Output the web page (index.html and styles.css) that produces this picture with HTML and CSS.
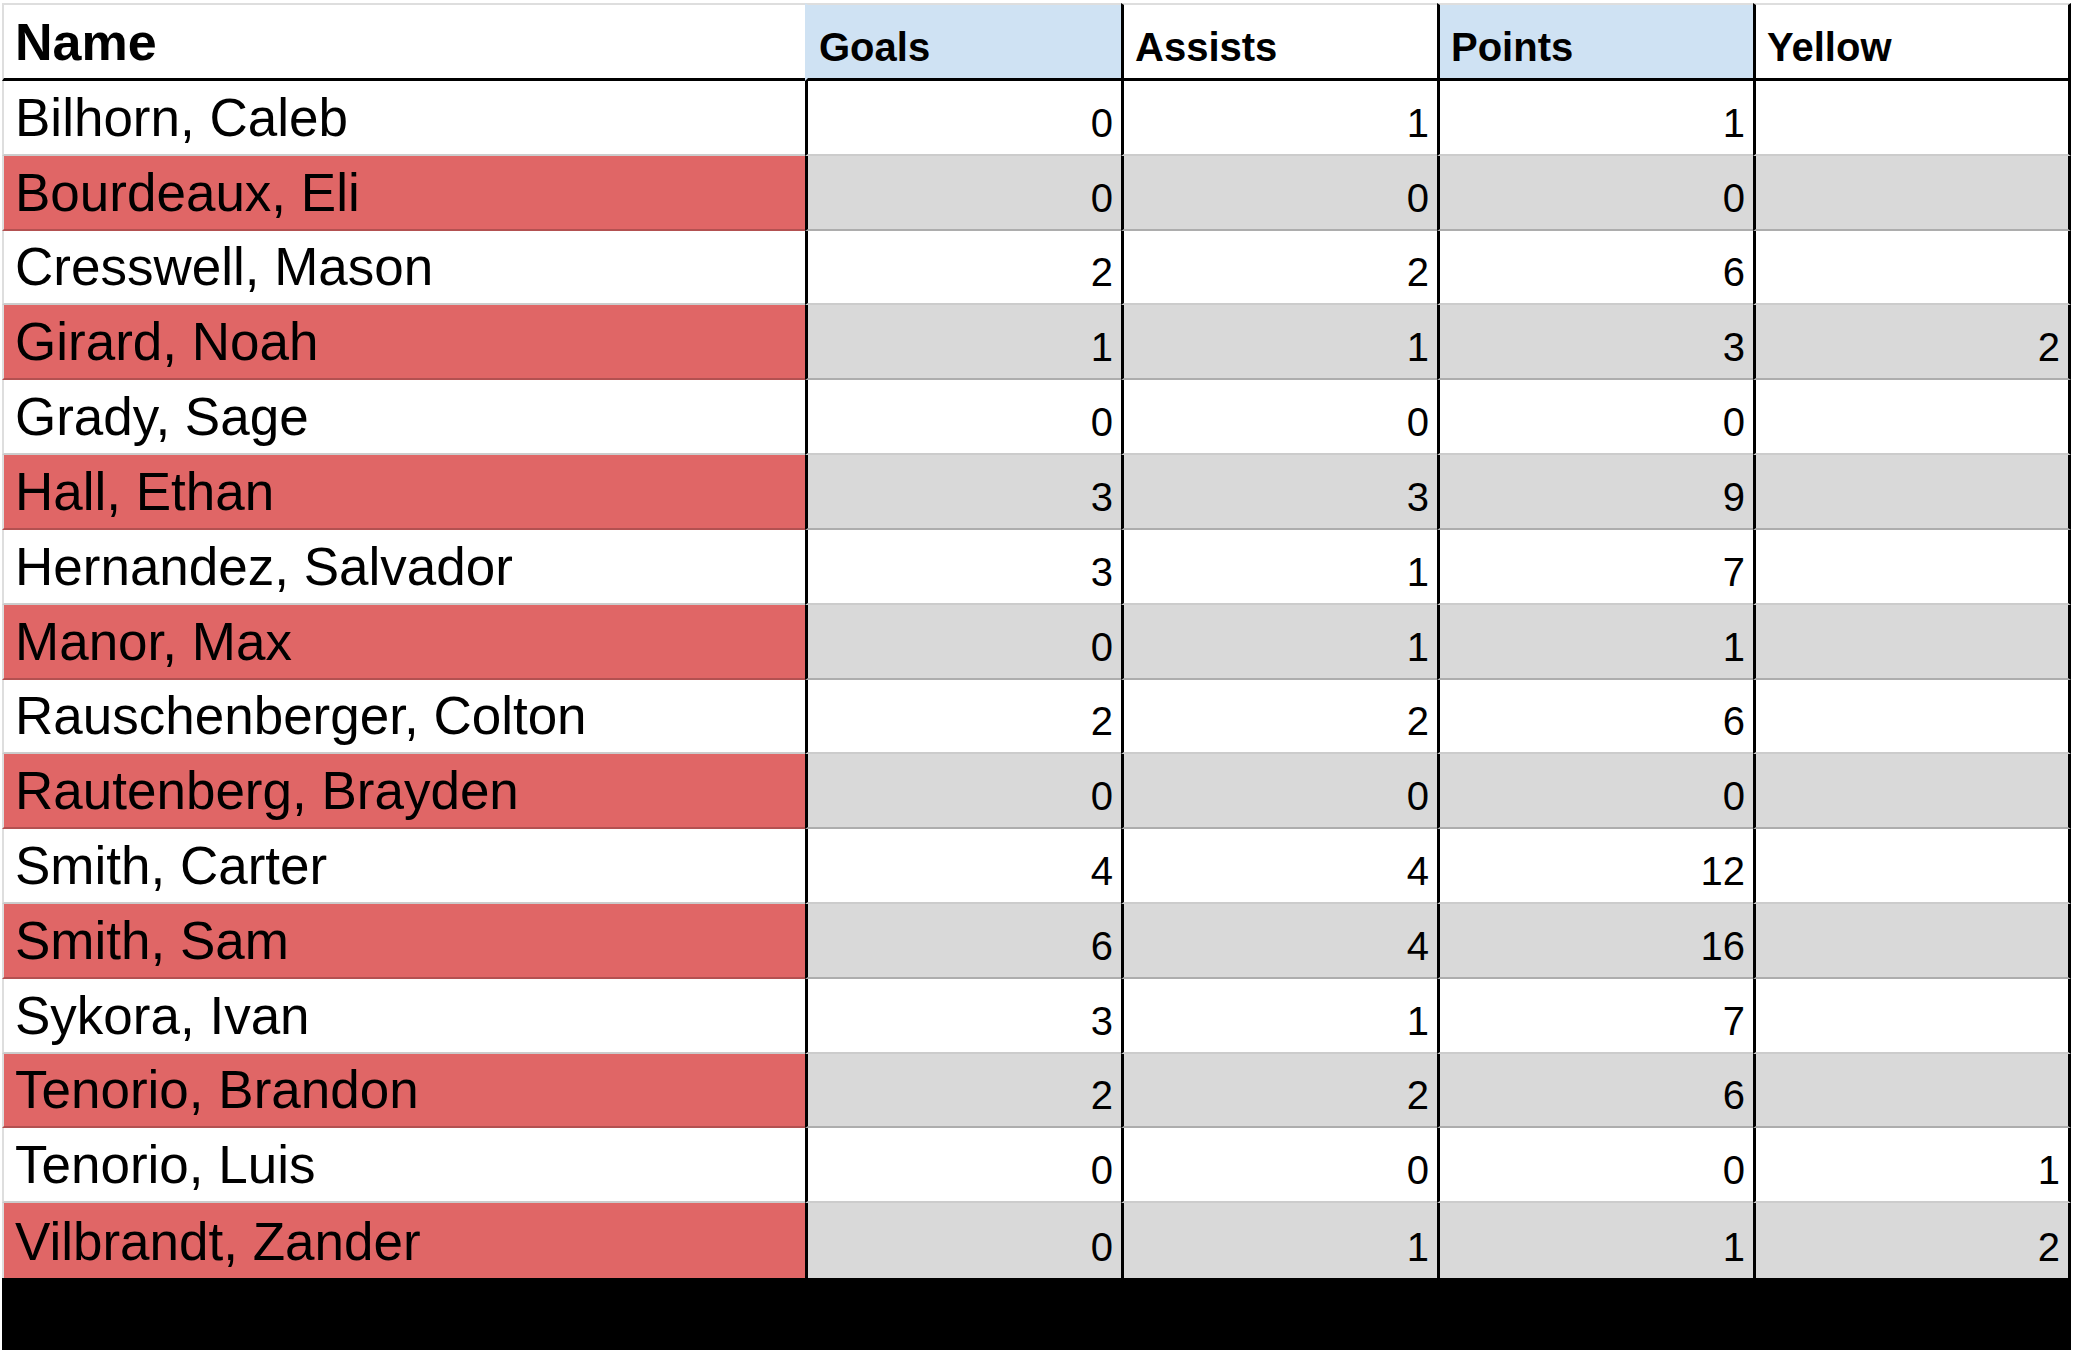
FILE: index.html
```html
<!DOCTYPE html>
<html lang="en">
<head>
<meta charset="utf-8">
<title>Player stats</title>
<link rel="stylesheet" href="styles.css">
</head>
<body>
<div class="sheet">
  <div class="row head">
    <div class="cell name">Name</div>
    <div class="cell num first blue">Goals</div>
    <div class="cell num">Assists</div>
    <div class="cell num blue">Points</div>
    <div class="cell num last">Yellow</div>
  </div>

  <div class="row"><div class="cell name">Bilhorn, Caleb</div><div class="cell num">0</div><div class="cell num">1</div><div class="cell num">1</div><div class="cell num last"></div></div>
  <div class="row alt"><div class="cell name">Bourdeaux, Eli</div><div class="cell num">0</div><div class="cell num">0</div><div class="cell num">0</div><div class="cell num last"></div></div>
  <div class="row"><div class="cell name">Cresswell, Mason</div><div class="cell num">2</div><div class="cell num">2</div><div class="cell num">6</div><div class="cell num last"></div></div>
  <div class="row alt"><div class="cell name">Girard, Noah</div><div class="cell num">1</div><div class="cell num">1</div><div class="cell num">3</div><div class="cell num last">2</div></div>
  <div class="row"><div class="cell name">Grady, Sage</div><div class="cell num">0</div><div class="cell num">0</div><div class="cell num">0</div><div class="cell num last"></div></div>
  <div class="row alt"><div class="cell name">Hall, Ethan</div><div class="cell num">3</div><div class="cell num">3</div><div class="cell num">9</div><div class="cell num last"></div></div>
  <div class="row"><div class="cell name">Hernandez, Salvador</div><div class="cell num">3</div><div class="cell num">1</div><div class="cell num">7</div><div class="cell num last"></div></div>
  <div class="row alt"><div class="cell name">Manor, Max</div><div class="cell num">0</div><div class="cell num">1</div><div class="cell num">1</div><div class="cell num last"></div></div>
  <div class="row"><div class="cell name">Rauschenberger, Colton</div><div class="cell num">2</div><div class="cell num">2</div><div class="cell num">6</div><div class="cell num last"></div></div>
  <div class="row alt"><div class="cell name">Rautenberg, Brayden</div><div class="cell num">0</div><div class="cell num">0</div><div class="cell num">0</div><div class="cell num last"></div></div>
  <div class="row"><div class="cell name">Smith, Carter</div><div class="cell num">4</div><div class="cell num">4</div><div class="cell num">12</div><div class="cell num last"></div></div>
  <div class="row alt"><div class="cell name">Smith, Sam</div><div class="cell num">6</div><div class="cell num">4</div><div class="cell num">16</div><div class="cell num last"></div></div>
  <div class="row"><div class="cell name">Sykora, Ivan</div><div class="cell num">3</div><div class="cell num">1</div><div class="cell num">7</div><div class="cell num last"></div></div>
  <div class="row alt"><div class="cell name">Tenorio, Brandon</div><div class="cell num">2</div><div class="cell num">2</div><div class="cell num">6</div><div class="cell num last"></div></div>
  <div class="row"><div class="cell name">Tenorio, Luis</div><div class="cell num">0</div><div class="cell num">0</div><div class="cell num">0</div><div class="cell num last">1</div></div>
  <div class="row alt final"><div class="cell name">Vilbrandt, Zander</div><div class="cell num">0</div><div class="cell num">1</div><div class="cell num">1</div><div class="cell num last">2</div></div>

  <div class="footer-bar"></div>
</div>
</body>
</html>
```

FILE: styles.css
```css
* { box-sizing: border-box; }

html, body {
  margin: 0;
  padding: 0;
  background: #ffffff;
}

body {
  font-family: "Liberation Sans", Arial, sans-serif;
  color: #000;
  width: 2075px;
  height: 1350px;
  overflow: hidden;
}

.sheet {
  margin-left: 2px;
  padding-top: 3px;
  width: 2069px;
}

.row {
  display: grid;
  grid-template-columns: 803px 316px 316px 316px 318px;
  height: 74.8125px;
}

.cell {
  display: flex;
  align-items: flex-end;
  line-height: 1;
  border-bottom: 2px solid rgba(0, 0, 0, 0.2);
  white-space: nowrap;
  overflow: hidden;
}

.cell.name {
  font-size: 53px;
  padding: 0 0 10px 11px;
  border-left: 2px solid #dedede;
}

.cell.num {
  font-size: 40px;
  justify-content: flex-end;
  padding: 0 8px 11px 0;
  border-left: 3px solid #000;
}

.cell.last {
  border-right: 3px solid #000;
}

.row.alt .cell.name {
  background: #e06666;
}

.row.alt .cell.num {
  background: #d9d9d9;
}

.row.final .cell {
  border-bottom: none;
}

/* header */
.row.head {
  height: 78px;
}

.row.head .cell {
  font-weight: bold;
  border-top: 2px solid #dedede;
  border-bottom: 3px solid #000;
  justify-content: flex-start;
}

.row.head .cell.name {
  font-size: 52px;
  padding: 0 0 10px 11px;
}

.row.head .cell.num {
  font-size: 40px;
  padding: 0 0 11px 11px;
}

.row.head .cell.first {
  border-left-color: transparent;
}

.row.head .cell.blue {
  background: #cfe2f3;
}

.footer-bar {
  height: 72px;
  background: #000;
}
```
